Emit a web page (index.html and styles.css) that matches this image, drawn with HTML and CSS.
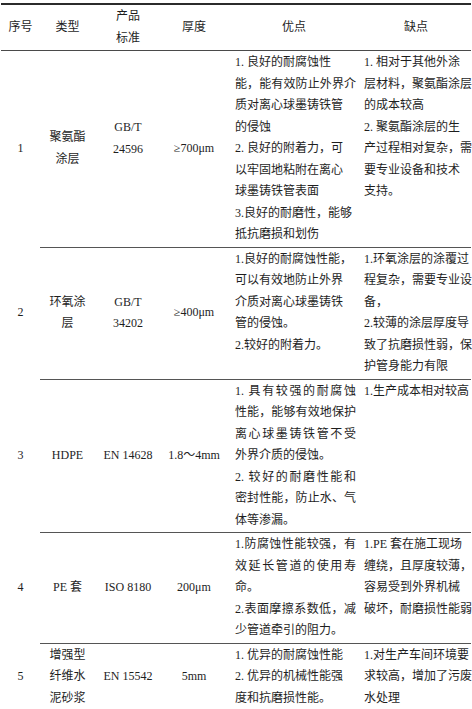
FILE: index.html
```html
<!DOCTYPE html>
<html lang="zh-CN">
<head>
<meta charset="utf-8">
<title>外涂层对比</title>
<link rel="stylesheet" href="styles.css">
</head>
<body>
<table class="spec">
  <colgroup>
    <col class="c-no"><col class="c-type"><col class="c-std"><col class="c-thk"><col class="c-pro"><col class="c-con">
  </colgroup>
  <thead>
    <tr><th>序号</th><th>类型</th><th>产品<br>标准</th><th>厚度</th><th>优点</th><th>缺点</th></tr>
  </thead>
  <tbody>
    <tr>
      <td class="no">1</td>
      <td>聚氨酯<br>涂层</td>
      <td class="raise">GB/T<br>24596</td>
      <td>≥700μm</td>
      <td class="txt pro">
        <span class="ln">1. 良好的耐腐蚀性</span>
        <span class="ln j">能，能有效防止外界介</span>
        <span class="ln">质对离心球墨铸铁管</span>
        <span class="ln">的侵蚀</span>
        <span class="ln">2. 良好的附着力，可</span>
        <span class="ln">以牢固地粘附在离心</span>
        <span class="ln">球墨铸铁管表面</span>
        <span class="ln">3.良好的耐磨性，能够</span>
        <span class="ln">抵抗磨损和划伤</span>
      </td>
      <td class="txt con">
        <span class="ln">1. 相对于其他外涂</span>
        <span class="ln">层材料，聚氨酯涂层</span>
        <span class="ln">的成本较高</span>
        <span class="ln">2. 聚氨酯涂层的生</span>
        <span class="ln">产过程相对复杂，需</span>
        <span class="ln">要专业设备和技术</span>
        <span class="ln">支持。</span>
      </td>
    </tr>
    <tr>
      <td class="no">2</td>
      <td>环氧涂<br>层</td>
      <td>GB/T<br>34202</td>
      <td>≥400μm</td>
      <td class="txt pro">
        <span class="ln">1.良好的耐腐蚀性能，</span>
        <span class="ln">可以有效地防止外界</span>
        <span class="ln">介质对离心球墨铸铁</span>
        <span class="ln">管的侵蚀。</span>
        <span class="ln">2.较好的附着力。</span>
      </td>
      <td class="txt con">
        <span class="ln">1.环氧涂层的涂覆过</span>
        <span class="ln">程复杂，需要专业设</span>
        <span class="ln">备，</span>
        <span class="ln">2.较薄的涂层厚度导</span>
        <span class="ln">致了抗磨损性弱，保</span>
        <span class="ln">护管身能力有限</span>
      </td>
    </tr>
    <tr>
      <td class="no">3</td>
      <td>HDPE</td>
      <td>EN 14628</td>
      <td>1.8～4mm</td>
      <td class="txt pro">
        <span class="ln j">1. 具有较强的耐腐蚀</span>
        <span class="ln j">性能，能够有效地保护</span>
        <span class="ln j">离心球墨铸铁管不受</span>
        <span class="ln">外界介质的侵蚀。</span>
        <span class="ln j">2. 较好的耐磨性能和</span>
        <span class="ln j">密封性能，防止水、气</span>
        <span class="ln">体等渗漏。</span>
      </td>
      <td class="txt con">
        <span class="ln">1.生产成本相对较高</span>
      </td>
    </tr>
    <tr>
      <td class="no">4</td>
      <td>PE 套</td>
      <td>ISO 8180</td>
      <td>200μm</td>
      <td class="txt pro">
        <span class="ln j">1.防腐蚀性能较强，有</span>
        <span class="ln j">效延长管道的使用寿</span>
        <span class="ln">命。</span>
        <span class="ln j">2.表面摩擦系数低，减</span>
        <span class="ln">少管道牵引的阻力。</span>
      </td>
      <td class="txt con">
        <span class="ln">1.PE 套在施工现场</span>
        <span class="ln">缠绕，且厚度较薄，</span>
        <span class="ln">容易受到外界机械</span>
        <span class="ln">破坏，耐磨损性能弱</span>
      </td>
    </tr>
    <tr>
      <td class="no">5</td>
      <td>增强型<br>纤维水<br>泥砂浆</td>
      <td>EN 15542</td>
      <td>5mm</td>
      <td class="txt pro">
        <span class="ln">1. 优异的耐腐蚀性能</span>
        <span class="ln">2. 优异的机械性能强</span>
        <span class="ln">度和抗磨损性能。</span>
      </td>
      <td class="txt con">
        <span class="ln">1.对生产车间环境要</span>
        <span class="ln">求较高，增加了污废</span>
        <span class="ln">水处理</span>
      </td>
    </tr>
  </tbody>
</table>
</body>
</html>
```

FILE: styles.css
```css
body {
  margin: 0;
  background: #ffffff;
  color: #1e1e1e;
  font-family: "Liberation Serif", "Noto Sans CJK SC", serif;
  font-size: 12px;
}

.spec {
  border-collapse: collapse;
  table-layout: fixed;
  width: 470px;
  margin: 3px 0 0 1px;
  border-top: 2px solid #2b2b2b;
  border-bottom: 2px solid #2b2b2b;
  line-height: 21.5px;
}

.c-no { width: 39px; }
.c-type { width: 55px; }
.c-std { width: 66px; }
.c-thk { width: 66px; }
.c-pro { width: 134px; }
.c-con { width: 110px; }

.spec th {
  font-weight: normal;
  padding: 1px 0;
  text-align: center;
  vertical-align: middle;
  border-bottom: 1px solid #4a4a4a;
}

.spec td {
  padding: 1px 0;
  text-align: center;
  vertical-align: middle;
  border-bottom: 1px solid #555555;
}

.spec td.no {
  border-bottom: none;
}

.spec td.raise {
  padding-bottom: 21px;
}

.spec td.txt {
  text-align: left;
  vertical-align: top;
}

.spec td.pro {
  padding-left: 8px;
  padding-right: 5px;
}

.spec td.con {
  padding-left: 3px;
  padding-right: 0;
}

.ln {
  display: block;
  white-space: nowrap;
}

.ln.j {
  white-space: normal;
  text-align: justify;
  text-align-last: justify;
}
```
